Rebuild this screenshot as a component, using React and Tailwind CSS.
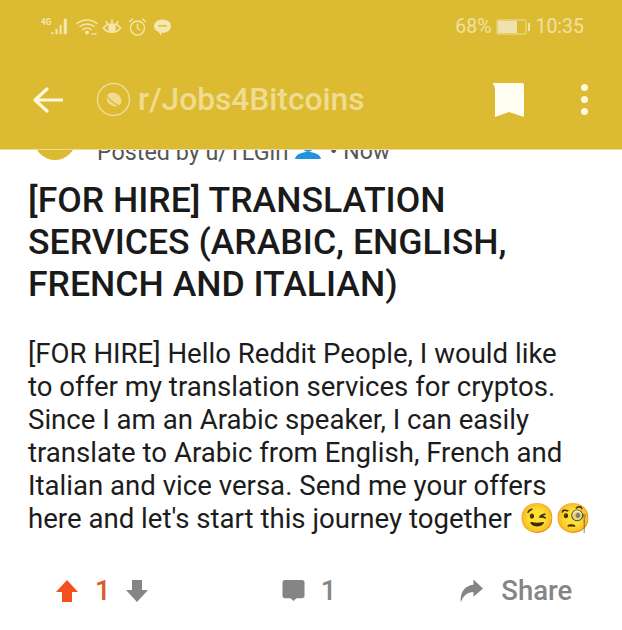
function Bubble() {
  return (
    <svg width="19" height="19" viewBox="0 0 18 18">
      <path d="M9 1.500c4.400 0 8 2.600 8 6.200s-3.600 6.200-8 6.200c-.4 0-.6 0-1 0l-.4 2.600-2.600-3.400C2.600 11.700 1 10 1 7.700 1 4.100 4.600 1.500 9 1.500z" fill="#f5e7b0" />
      <rect x="5" y="6.500" width="8" height="2" fill="#dcbb35" opacity="0.7" />
    </svg>
  );
}
function StatusIcons() {
  return (
    <div className="flex items-center gap-[4px]">
      <svg width="31" height="22" viewBox="0 0 30 20" fill="none">
        <text x="0" y="8" fontSize="8" fontWeight="700" fill="#f5e7b0" fontFamily="Roboto, sans-serif">4G</text>
        <rect x="10" y="15" width="2" height="2" fill="#f5e7b0" />
        <rect x="14" y="12" width="2" height="5" fill="#f5e7b0" />
        <rect x="18" y="8" width="2" height="9" fill="#f5e7b0" />
        <rect x="22" y="2" width="3" height="15" fill="#f5e7b0" />
      </svg>
      <svg width="22" height="20" viewBox="0 0 22 20" fill="none" stroke="#f5e7b0" strokeWidth="1.500" strokeLinecap="round">
        <path d="M1 6.500c5.500-4.800 14.500-4.800 20 0" />
        <path d="M4 9.500c3.800-3.200 10.200-3.200 14 0" />
        <path d="M7 12.500c2.200-1.700 5.800-1.700 8 0" />
        <circle cx="11" cy="15.500" r="1.200" fill="#f5e7b0" />
        <path d="M16 17h4" strokeDasharray="1.500 1.500" />
      </svg>
      <svg width="20" height="20" viewBox="0 0 20 20" fill="none" stroke="#f5e7b0" strokeWidth="1.500" strokeLinecap="round">
        <path d="M1.500 11C5 5.500 15 5.500 18.500 11 15 16.500 5 16.500 1.500 11z" />
        <circle cx="10" cy="11" r="3" fill="#f5e7b0" />
        <path d="M4 4.500l1.500 2M10 3v2.500M16 4.500l-1.500 2" />
      </svg>
      <svg width="19" height="20" viewBox="0 0 19 20" fill="none" stroke="#f5e7b0" strokeWidth="1.300" strokeLinecap="round" className="ml-[2px]">
        <circle cx="9.500" cy="11" r="7" />
        <path d="M9.500 7v4.200l2.600 1.500M1.500 4.500l3-2.500M17.500 4.500l-3-2.500" />
      </svg>
      <span className="ml-[2px] block"><Bubble /></span>
    </div>
  );
}
function SnooBadge() {
  return (
    <svg width="35" height="35" viewBox="0 0 35 35" fill="none">
      <circle cx="17.500" cy="17.500" r="16" stroke="#f0dc8f" strokeWidth="1.500" />
      <ellipse cx="18" cy="17.500" rx="8" ry="6.500" fill="#f0dc8f" transform="rotate(35 18 17.500)" />
      <path d="M8 10c3 6 10 13 18 15" stroke="#dcbb35" strokeWidth="1.500" />
    </svg>
  );
}
function ArrowUp() {
  return (
    <svg width="22" height="24" viewBox="0 0 22 24" className="block">
      <path d="M11 1 22 13h-6v10H6V13H0z" fill="#f4501e" />
    </svg>
  );
}
function ArrowDown() {
  return (
    <svg width="22" height="24" viewBox="0 0 22 24" className="block">
      <path d="M6 1h10v10h6L11 23 0 11h6z" fill="#858585" />
    </svg>
  );
}
export default function App() {
  return (
    <div className="w-[622px] h-[630px] overflow-hidden bg-white text-[#1b1b1b]" style={{ fontFamily: "Roboto, 'Noto Sans', sans-serif" }}>
      <header className="relative z-10 h-[150px] bg-[#dcbb33] border-b border-[#eedb9a] flex flex-col">
        <div className="h-[54px] flex items-center justify-between pl-[41px] pr-[38px]">
          <StatusIcons />
          <div className="flex items-center text-[19.500px] text-[#f1e1a0]">
            <span>68%</span>
            <svg width="36" height="20" viewBox="0 0 36 20" className="ml-[5px] mr-[3px]" fill="none">
              <rect x="1" y="3" width="29" height="14" rx="1" stroke="#efdf9f" strokeWidth="1" />
              <rect x="2" y="4" width="19" height="12" fill="#f0e2ac" />
              <rect x="32" y="6" width="2" height="8" fill="#f0e2ac" />
            </svg>
            <span>10:35</span>
          </div>
        </div>
        <div className="flex-1 flex items-center pl-[33px] pr-[34px] pb-[4px]">
          <svg width="30" height="30" viewBox="0 0 30 30" fill="none" stroke="#fff8df" strokeWidth="3.200" strokeLinecap="round" strokeLinejoin="round">
            <path d="M2 15h27M14 4 2 15l12 11" />
          </svg>
          <div className="ml-[33px]"><SnooBadge /></div>
          <span className="ml-[7px] text-[31.700px] font-medium text-[#efdc90]">r/Jobs4Bitcoins</span>
          <div className="flex-1" />
          <svg width="32" height="36" viewBox="0 0 32 36">
            <path d="M1 1h28c1.500 0 2 1 2 2v32l-15-5-14 5V9c0-4-1-6-3-8z" fill="#fffdf2" />
          </svg>
          <div className="ml-[56px] flex flex-col gap-[5px]">
            <span className="block w-[7px] h-[7px] rounded-full bg-[#fff8df]" />
            <span className="block w-[7px] h-[7px] rounded-full bg-[#fff8df]" />
            <span className="block w-[7px] h-[7px] rounded-full bg-[#fff8df]" />
          </div>
        </div>
      </header>
      <main className="-mt-[8px] pl-[28px] pr-[20px]">
        <div className="flex items-center h-[20px]">
          <span className="block w-[42px] h-[42px] -mt-[26px] ml-[6px] rounded-full bg-[#dcbb33]" />
          <span className="ml-[21px] text-[23.300px] text-[#555]">Posted by u/TLGirl</span>
          <svg width="26" height="20" viewBox="0 0 26 20" className="ml-[6px]">
            <circle cx="13" cy="5" r="5" fill="#2294dc" />
            <path d="M0 17c1-5 7-7 13-7s12 2 13 7z" fill="#2294dc" />
          </svg>
          <span className="ml-[9px] text-[23px] text-[#555]">• Now</span>
        </div>
        <h1 className="mt-[17px] text-[35.600px] leading-[42px] font-medium text-[#1a1a1a] whitespace-nowrap">
          [FOR HIRE] TRANSLATION<br />SERVICES (ARABIC, ENGLISH,<br />FRENCH AND ITALIAN)
        </h1>
        <p className="mt-[32px] text-[27.600px] leading-[33px] text-[#1c1c1c] whitespace-nowrap">
          [FOR HIRE] Hello Reddit People, I would like<br />
          to offer my translation services for cryptos.<br />
          Since I am an Arabic speaker, I can easily<br />
          translate to Arabic from English, French and<br />
          Italian and vice versa. Send me your offers<br />
          here and let's start this journey together <span className="text-[29px] leading-none">😉🧐</span>
        </p>
        <div className="mt-[35px] flex items-center text-[#858585] text-[27.500px] font-medium">
          <span className="ml-[28px]"><ArrowUp /></span>
          <span className="ml-[17px] text-[#dd5a2a]">1</span>
          <span className="ml-[15px]"><ArrowDown /></span>
          <svg width="23" height="23" viewBox="0 0 24 24" className="ml-[134px]">
            <path d="M3 1h18c1.500 0 2.500 1 2.500 2.500v14c0 1.500-1 2.500-2.500 2.500h-6l-3 3-3-3H3c-1.500 0-2.500-1-2.500-2.500v-14C.5 2 1.500 1 3 1z" fill="#858585" />
          </svg>
          <span className="ml-[16px]">1</span>
          <svg width="25" height="26" viewBox="0 0 26 26" className="ml-[123px]">
            <path d="M15 1l10 9.500-10 8.500v-5C9 14 4 18 2 25 .5 15 6 7 15 6.500z" fill="#858585" />
          </svg>
          <span className="ml-[17px]">Share</span>
        </div>
      </main>
    </div>
  );
}
